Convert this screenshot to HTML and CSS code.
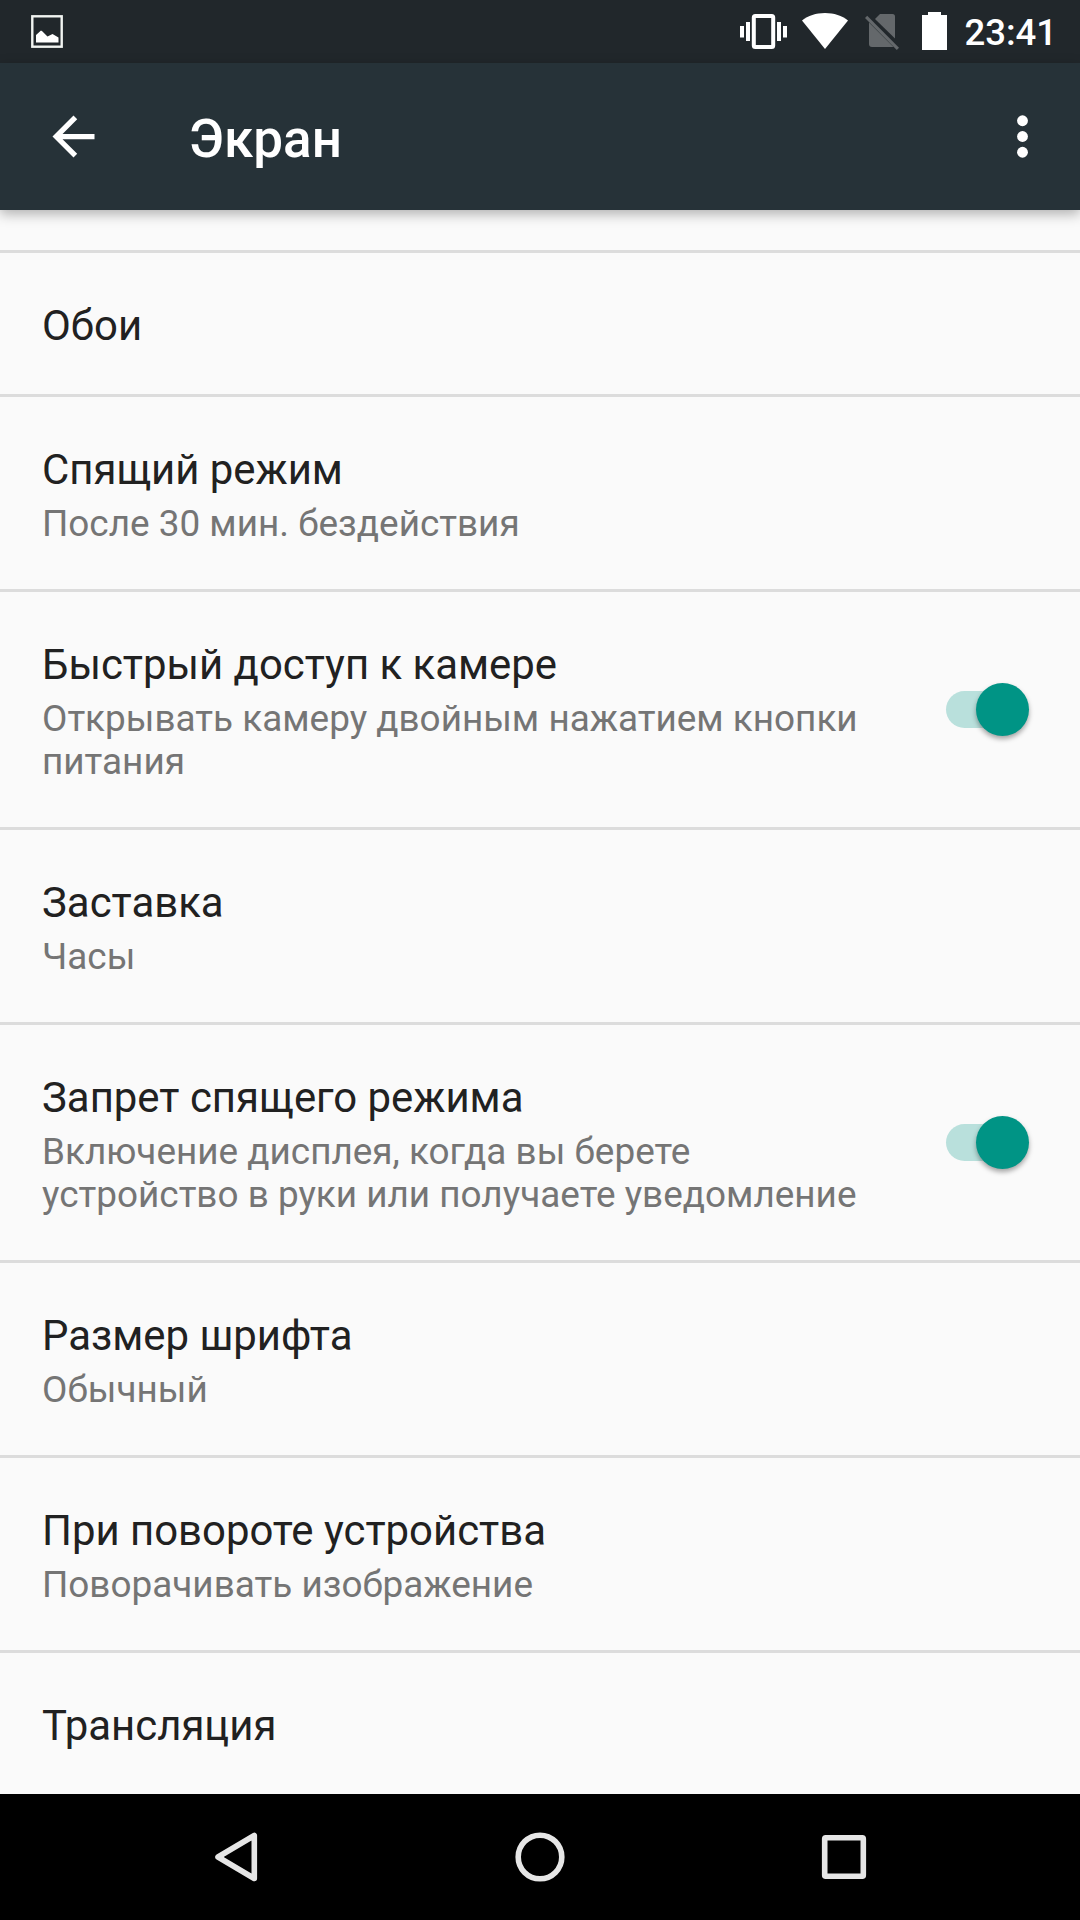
FILE: index.html
```html
<!DOCTYPE html>
<html lang="ru">

<head>
    <meta charset="utf-8">
    <title>Экран</title>
    <link rel="stylesheet" href="styles.css">
</head>

<body>
    <div class="screen">
        <div class="status-bar">
            <svg class="icon-picture" width="32" height="33" viewBox="0 0 32 33">
                <rect x="1.3" y="1.3" width="29.4" height="30.4" fill="none" stroke="#f1f4f1" stroke-width="2.4" />
                <path d="M5 27.500V20L10 15.500L11.500 16.500L16.500 21.500L21.500 19L27.500 22.500V27.500Z" fill="#fff" />
            </svg>
            <div class="status-icons">
                <svg class="icon-vibrate" width="47" height="36" viewBox="0 0 47 36" fill="#fff">
                    <rect x="0" y="12" width="4" height="11.500" />
                    <rect x="6" y="8" width="4" height="19" />
                    <rect x="37" y="8" width="4" height="19" />
                    <rect x="43" y="12" width="4" height="11.500" />
                    <rect x="13.800" y="2" width="19.400" height="31" rx="1.500" fill="none" stroke="#fff" stroke-width="4" />
                </svg>
                <svg class="icon-wifi" width="46" height="36" viewBox="0 0 46 36">
                    <path d="M23 36L0 7.500C6 2.700 14 0 23 0S40 2.700 46 7.500Z" fill="#fff" />
                </svg>
                <svg class="icon-sim" width="34" height="36" viewBox="0 0 34 36" fill="#64686b">
                    <path d="M10 5L15 0H27.500Q30 0 30 2.500V24.500Z" />
                    <path d="M4 8.500L28.500 33H7Q4 33 4 30Z" />
                    <path d="M0 4L2.200 1.800L34 33.800L31.800 36Z" />
                </svg>
                <svg class="icon-battery" width="25" height="38" viewBox="0 0 25 38">
                    <path d="M6 0H19V3H25V38H0V3H6Z" fill="#fff" />
                </svg>
                <span class="clock">23:41</span>
            </div>
        </div>

        <div class="toolbar">
            <svg class="back" width="63" height="63" viewBox="0 0 24 24">
                <path d="M20 11H7.830l5.590-5.590L12 4l-8 8 8 8 1.410-1.410L7.830 13H20v-2z" fill="#fff" />
            </svg>
            <h1>Экран</h1>
            <svg class="more" width="63" height="63" viewBox="0 0 24 24" fill="#fff">
                <circle cx="12" cy="6" r="2.070" />
                <circle cx="12" cy="12" r="2.070" />
                <circle cx="12" cy="18" r="2.070" />
            </svg>
        </div>

        <div class="list">
            <div class="item">
                <div class="text">
                    <div class="title">Обои</div>
                </div>
            </div>
            <div class="item">
                <div class="text">
                    <div class="title">Спящий режим</div>
                    <div class="summary">После 30 мин. бездействия</div>
                </div>
            </div>
            <div class="item">
                <div class="text">
                    <div class="title">Быстрый доступ к камере</div>
                    <div class="summary">Открывать камеру двойным нажатием кнопки питания</div>
                </div>
                <div class="switch"><span class="thumb"></span></div>
            </div>
            <div class="item">
                <div class="text">
                    <div class="title">Заставка</div>
                    <div class="summary">Часы</div>
                </div>
            </div>
            <div class="item">
                <div class="text">
                    <div class="title">Запрет спящего режима</div>
                    <div class="summary">Включение дисплея, когда вы берете устройство в руки или получаете уведомление</div>
                </div>
                <div class="switch"><span class="thumb"></span></div>
            </div>
            <div class="item">
                <div class="text">
                    <div class="title">Размер шрифта</div>
                    <div class="summary">Обычный</div>
                </div>
            </div>
            <div class="item">
                <div class="text">
                    <div class="title">При повороте устройства</div>
                    <div class="summary">Поворачивать изображение</div>
                </div>
            </div>
            <div class="item">
                <div class="text">
                    <div class="title">Трансляция</div>
                </div>
            </div>
        </div>

        <div class="nav-bar">
            <svg width="50" height="50" viewBox="0 0 50 50">
                <path d="M43.300 3.500V46.500L7 25Z" />
            </svg>
            <svg width="50" height="50" viewBox="0 0 50 50">
                <circle cx="25" cy="25" r="21.800" />
            </svg>
            <svg width="50" height="50" viewBox="0 0 50 50">
                <rect x="5.700" y="5.700" width="38.600" height="38.600" rx="1" />
            </svg>
        </div>
    </div>
</body>

</html>
```
FILE: styles.css
```css
* {
    margin: 0;
    padding: 0;
    box-sizing: border-box;
}

body {
    background: #fafafa;
    font-family: Roboto, "Noto Sans", sans-serif;
}

svg {
    display: block;
    flex: none;
}

.screen {
    width: 1080px;
    height: 1920px;
    display: flex;
    flex-direction: column;
    overflow: hidden;
}

/* status bar */
.status-bar {
    height: 63px;
    padding: 0 23px 0 31px;
    display: flex;
    justify-content: space-between;
    background: #21272b;
}

.icon-picture {
    margin-top: 15px;
}

.status-icons {
    display: flex;
    align-items: flex-start;
}

.icon-vibrate {
    margin: 14px 15px 0 0;
}

.icon-wifi {
    margin: 13px 17px 0 0;
}

.icon-sim {
    margin: 14px 23px 0 0;
}

.icon-battery {
    margin: 12px 17px 0 0;
}

.clock {
    margin-top: 11px;
    color: #fff;
    font-size: 36.5px;
    font-weight: 500;
    line-height: 43px;
}

/* toolbar */
.toolbar {
    height: 147px;
    padding: 0 26px 0 42px;
    display: flex;
    align-items: center;
    background: #263238;
    box-shadow: 0 4px 12px rgba(0, 0, 0, 0.3);
    position: relative;
    z-index: 1;
}

.toolbar h1 {
    flex: 1;
    margin-left: 84px;
    padding-top: 4px;
    color: #fff;
    font-size: 53px;
    font-weight: 500;
    line-height: 62px;
}

/* settings list */
.list {
    flex: 1;
    padding-top: 40px;
    background: #fafafa;
}

.item {
    padding: 48px 51px 44px 42px;
    display: flex;
    align-items: center;
    justify-content: space-between;
    border-top: 3px solid #dcdcdc;
}

.text {
    width: 830px;
}

.title {
    color: #212121;
    font-size: 41.9px;
    line-height: 49px;
}

.summary {
    margin-top: 8px;
    color: #757575;
    font-size: 36.9px;
    line-height: 43px;
}

/* negative margin evens out the item padding, the switch sits in the middle */
.switch {
    width: 83px;
    height: 53px;
    margin-top: -4px;
    display: flex;
    align-items: center;
}

.switch::before {
    content: "";
    width: 66px;
    height: 37px;
    margin-right: -36px;
    flex: none;
    border-radius: 19px;
    background: #b9e0dc;
}

.thumb {
    width: 53px;
    height: 53px;
    flex: none;
    border-radius: 50%;
    background: #009485;
    box-shadow: 0 3px 5px rgba(0, 0, 0, 0.35);
    z-index: 1;
}

/* navigation bar */
.nav-bar {
    height: 126px;
    padding: 0 211px;
    display: flex;
    align-items: center;
    justify-content: space-between;
    background: #000;
}

.nav-bar svg {
    fill: none;
    stroke: #e6e6e6;
    stroke-width: 5.6;
    stroke-linejoin: round;
}
```
